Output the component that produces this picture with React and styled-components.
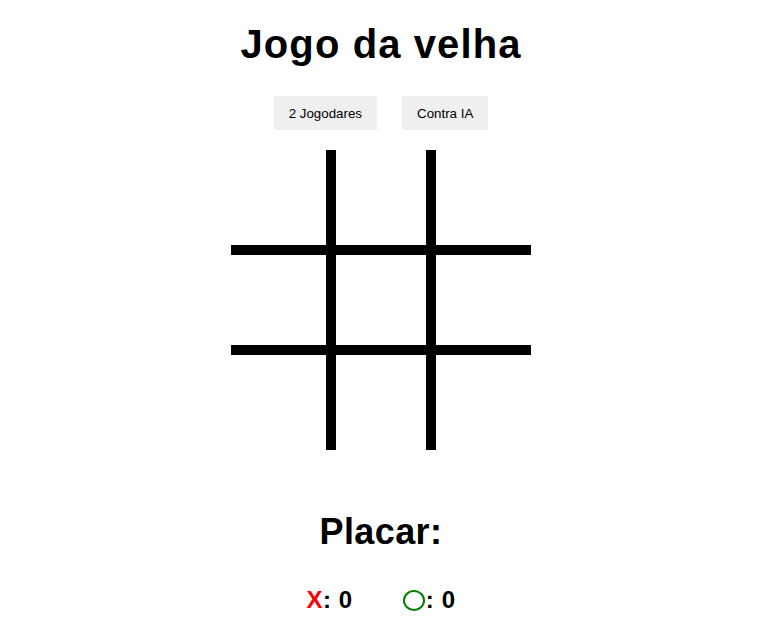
import React, { useState } from "react";
import styled, { createGlobalStyle } from "styled-components";

const Global = createGlobalStyle`
  html, body { margin: 0; padding: 0; background: #ffffff; }
  body { font-family: "Liberation Sans", Arial, sans-serif; color: #000; }
  * { box-sizing: border-box; }
`;

const Page = styled.main`
  display: flex;
  flex-direction: column;
  align-items: center;
  padding: 21px 9px 0 0;
  width: 771px;
`;

const Title = styled.h1`
  margin: 0;
  font-size: 40px;
  font-weight: 700;
  line-height: 46px;
  letter-spacing: 1.1px;
`;

const Modes = styled.div`
  display: flex;
  gap: 25px;
  margin-top: 29px;
`;

const ModeButton = styled.button`
  height: 34px;
  padding: 0 15px;
  border: none;
  background: #efefef;
  color: #000;
  font-family: "Liberation Sans", Arial, sans-serif;
  font-size: 13.33px;
  cursor: pointer;
`;

const Board = styled.div`
  display: grid;
  grid-template-columns: repeat(3, 100px);
  grid-template-rows: repeat(3, 100px);
  margin-top: 20px;
`;

const Cell = styled.div`
  border-style: solid;
  border-color: #000;
  border-width: ${({ $r }) => ($r === 0 ? 0 : 5)}px ${({ $c }) => ($c === 2 ? 0 : 5)}px
    ${({ $r }) => ($r === 2 ? 0 : 5)}px ${({ $c }) => ($c === 0 ? 0 : 5)}px;
  cursor: pointer;
`;

const ScoreTitle = styled.h2`
  margin: 61px 0 0;
  font-size: 36px;
  font-weight: 700;
  line-height: 41px;
  letter-spacing: 0.4px;
`;

const ScoreRow = styled.div`
  display: flex;
  gap: 50px;
  margin-top: 34px;
  font-size: 24px;
  font-weight: 700;
  line-height: 28px;
  letter-spacing: 0.6px;
`;

const Score = styled.span`
  display: inline-flex;
  align-items: baseline;
`;

const XMark = styled.span`
  color: #ff0000;
`;

const OMark = styled.span`
  display: inline-block;
  width: 22px;
  height: 21px;
  margin-right: 1px;
  border: 2px solid #008000;
  border-radius: 50%;
  align-self: center;
`;

export default function App() {
  const [cells] = useState(Array(9).fill(null));
  return (
    <>
      <Global />
      <Page>
        <Title>Jogo da velha</Title>
        <Modes>
          <ModeButton>2 Jogodares</ModeButton>
          <ModeButton>Contra IA</ModeButton>
        </Modes>
        <Board>
          {cells.map((v, i) => (
            <Cell key={i} $r={Math.floor(i / 3)} $c={i % 3} />
          ))}
        </Board>
        <ScoreTitle>Placar:</ScoreTitle>
        <ScoreRow>
          <Score>
            <XMark>X</XMark>: 0
          </Score>
          <Score>
            <OMark />: 0
          </Score>
        </ScoreRow>
      </Page>
    </>
  );
}
